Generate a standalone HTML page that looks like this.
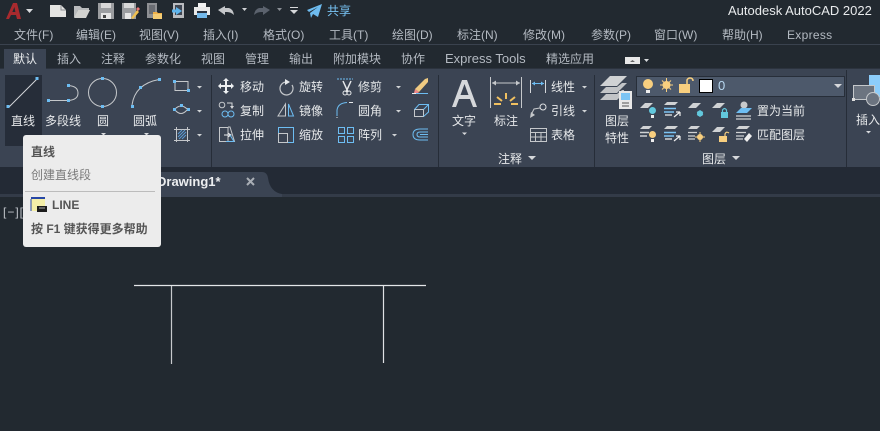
<!DOCTYPE html>
<html><head><meta charset="utf-8">
<style>
html,body{margin:0;padding:0;width:880px;height:431px;overflow:hidden;background:#222930}
body{position:relative;font-family:"Liberation Sans","Noto Sans CJK SC",sans-serif;font-size:12px;color:#e6e8ea}
.t{position:absolute;white-space:nowrap;line-height:16px}
.m{color:#b4bac2;top:27px}
.r{color:#b4bac2;top:51px}
.c{transform:translateX(-50%)}
.b{position:absolute}
svg{position:absolute;left:0;top:0}
</style></head><body>
<!-- bars -->
<div class="b" style="left:0;top:44px;width:880px;height:1px;background:#3a424e"></div>
<div class="b" style="left:0;top:69px;width:880px;height:98px;background:#3b4453"></div>
<div class="b" style="left:0;top:68px;width:880px;height:1px;background:#2c333e"></div>
<div class="b" style="left:0;top:167px;width:880px;height:27px;background:#232a35"></div>
<div class="b" style="left:0;top:194px;width:880px;height:3px;background:#333b48"></div>
<div class="b" style="left:4px;top:49px;width:42px;height:20px;background:#3b4453"></div>
<div class="b" style="left:5px;top:75px;width:37px;height:71px;background:#262d39"></div>

<svg width="880" height="431" viewBox="0 0 880 431" fill="none">
<!-- file tab -->
<path d="M150 194V172H262Q267 172 268 178Q270 192 282 194V197H150Z" fill="#3b4453"/>
<!-- panel separators -->
<g stroke="#262d38" stroke-width="1">
<path d="M211.500 75V167M438.500 75V167M594.500 75V167M846.500 70V167"/>
</g>
<!-- QAT: A logo -->
<path fill-rule="evenodd" d="M6 19L13 3H17L21 19H17L16 15H11L9 19ZM12.300 12H15.400L14.400 7Z" fill="#a82a2e"/>
<path d="M26 9H33L29.500 13Z" fill="#d8dadd"/>
<!-- new -->
<path d="M50 5H61L66 10V17H50Z" fill="#e4e4e2"/><path d="M61 5V10H66" stroke="#8b8e92"/>
<!-- open -->
<path d="M74 8V6H80L82 8H89V10H78L75 17H74Z" fill="#b9bbbd"/><path d="M78 10H90L86 18H74Z" fill="#d2d2d0"/>
<!-- save -->
<path d="M98 3H114V19H98Z" fill="#9b9da0"/><path d="M101 3H111V8H101Z" fill="#d8d8d8"/><path d="M101 13H111V19H101Z" fill="#e6e6e6"/><path d="M103 15H106V18H103Z" fill="#444"/>
<!-- saveas -->
<path d="M122 3H136V19H122Z" fill="#9b9da0"/><path d="M124 3H134V8H124Z" fill="#d8d8d8"/><path d="M125 13H131V19H125Z" fill="#e6e6e6"/>
<path d="M131 18L137 10L139 12L133 19Z" fill="#f0c050"/><path d="M136 9L138 7L140 9L138 11Z" fill="#e77"/>
<!-- phone open -->
<path d="M147 3H157V18H147Z" fill="#8e9094"/><path d="M149 5H155V14H149Z" fill="#6a6d73"/>
<path d="M153 12H157L158 13H162V19H153Z" fill="#eeb04a"/><path d="M153 14H162V19H153Z" fill="#f5cc74"/>
<!-- phone share -->
<path d="M173 3H184V18H173Z" fill="#b9bbbf"/><path d="M175 5H182V15H175Z" fill="#3f4652"/>
<path d="M172 9.500H176V7L182 11L176 15V12.500H172Z" fill="#5eb4ec"/>
<!-- print -->
<path d="M198 3H206V7H198Z" fill="#f2f2f2"/><path d="M194 7H210V15H194Z" fill="#e9e9e9"/><path d="M197 11H207V18H197Z" fill="#74b9ea"/><path d="M197 11H207V13H197Z" fill="#2a3240"/>
<!-- undo redo -->
<path d="M218 10L225 6V8H229Q233 9 234 15Q231 12 227 12H225V15Z" fill="#c5c7ca"/>
<path d="M242 8H247L244.500 11Z" fill="#d0d2d5"/>
<path d="M270 10L263 6V8H259Q255 9 254 15Q257 12 261 12H263V15Z" fill="#5b626d"/>
<path d="M277 8H282L279.500 11Z" fill="#8a8f96"/>
<path d="M290 7H298V8H290Z" fill="#d6d8da"/><path d="M290 10H298L294 14Z" fill="#d6d8da"/>
<!-- share plane -->
<path d="M307 10L322 4L318 17L313 14L311 18L310 13L318 7L309 12Z" fill="#6ebcf0"/>
<!-- minimized panel btn -->
<path d="M625 57H640V64H625Z" fill="#e8e8e8"/><path d="M630 62H635L632.500 60Z" fill="#666"/>
<path d="M644 59H649L646.500 62Z" fill="#d8dadd"/>

<!-- line -->
<path d="M9 107L37 79" stroke="#d4d6d8" stroke-width="1"/>
<rect x="6.500" y="105" width="3" height="3" fill="#6dbdf2"/><rect x="35.500" y="77" width="3" height="3" fill="#6dbdf2"/>
<!-- polyline -->
<path d="M50 100.500H68M68 85.500Q78 86 78 93Q78 100 68 100.500" stroke="#c5c8cb"/>
<rect x="47" y="99" width="3" height="3" fill="#6dbdf2"/><rect x="67" y="99" width="3" height="3" fill="#6dbdf2"/><rect x="67" y="84" width="3" height="3" fill="#6dbdf2"/>
<!-- circle -->
<circle cx="102.500" cy="92.500" r="14" stroke="#c5c8cb"/>
<rect x="101" y="77" width="3" height="3" fill="#6dbdf2"/><rect x="101" y="105" width="3" height="3" fill="#6dbdf2"/>
<!-- arc -->
<path d="M132 105Q135 84 159 79.500" stroke="#c5c8cb"/>
<rect x="131" y="105" width="3" height="3" fill="#6dbdf2"/><rect x="139" y="86" width="3" height="3" fill="#6dbdf2"/><rect x="158" y="78" width="3" height="3" fill="#6dbdf2"/>
<!-- caret small -->
<path d="M101 133H106L103.500 135.500Z M144 133H149L146.500 135.500Z" fill="#d8dadd"/>
<!-- rect / ellipse / hatch -->
<path d="M175 81.500H188V90.500H175Z" stroke="#c5c8cb"/>
<rect x="173" y="80" width="3" height="3" fill="#6dbdf2"/><rect x="187" y="89" width="3" height="3" fill="#6dbdf2"/>
<path d="M175 109Q181 103 187 109M175 110Q181 117 187 110" stroke="#c5c8cb"/>
<rect x="173" y="108" width="3" height="3" fill="#6dbdf2"/><rect x="180" y="104" width="3" height="3" fill="#6dbdf2"/><rect x="187" y="108" width="3" height="3" fill="#6dbdf2"/>
<path d="M174 129.500H190M174 140.500H190M176.500 127V142M187.500 127V142" stroke="#c5c8cb"/>
<path d="M178 134L182 130M178 137L185 130M179 139L186 132M182 139L186 135" stroke="#5a9bd4"/>
<path d="M197 86H202L199.500 88.500ZM197 110H202L199.500 112.500ZM197 134H202L199.500 136.500Z" fill="#d0d3d6"/>

<!-- modify -->
<path d="M226 79V93M219 86H233" stroke="#eef0f2" stroke-width="2"/>
<path d="M226 78L223 81H229ZM226 94L223 91H229ZM218 86L221 83V89ZM234 86L231 83V89Z" fill="#eef0f2"/>
<circle cx="222" cy="105" r="2.800" stroke="#c5c8cb"/><circle cx="225" cy="114" r="3" stroke="#6dbdf2"/><circle cx="231" cy="114" r="3" stroke="#6dbdf2"/>
<path d="M227 103H232V107" stroke="#d5d7da"/><path d="M230 106H234L232 109Z" fill="#d5d7da"/>
<path d="M219.500 127.500H228V141.500H219.500ZM228 127H230L234.500 141.500H228" stroke="#c5c8cb"/>
<path d="M224 135H231M228 133L231 135L228 137" stroke="#eef0f2"/>
<path d="M230 135L234 141.500H226" stroke="#6dbdf2"/>
<path d="M287 82A6.500 6.500 0 1 0 292 85" stroke="#c5c8cb" stroke-width="1.200"/>
<path d="M285 79L290 82L285 85Z" fill="#e6e8ea"/>
<path d="M285.500 116H278L285.500 104Z" stroke="#c5c8cb" fill="none"/>
<path d="M288.500 104L293.500 116H288.500Z" stroke="#6dbdf2"/>
<path d="M278.500 127.500H293.500V142.500H278.500Z" stroke="#6dbdf2"/>
<path d="M278.500 133.500H287.500V142.500H278.500Z" stroke="#c5c8cb" fill="#3b4453"/>
<path d="M337 79H353" stroke="#6dbdf2" stroke-dasharray="2 1"/>
<path d="M343 81L348 92M351 81L346 92" stroke="#e6e8ea" stroke-width="1.500"/>
<circle cx="345" cy="93" r="2" stroke="#e6e8ea"/><circle cx="349" cy="93" r="2" stroke="#e6e8ea"/>
<path d="M337 116V110Q338 103 347 102.500" stroke="#6dbdf2"/><path d="M337 118V117M349 102.500H353" stroke="#e6e8ea"/>
<path d="M338.500 127.500H344.500V133.500H338.500ZM347.500 127.500H353.500V133.500H347.500ZM338.500 136.500H344.500V142.500H338.500ZM347.500 136.500H353.500V142.500H347.500Z" stroke="#6dbdf2"/>
<path d="M396 86H401L398.500 88.500ZM396 110H401L398.500 112.500ZM392 134H397L394.500 136.500Z" fill="#d0d3d6"/>
<!-- eraser etc -->
<path d="M415 89L425 79L428 78V82L419 92Z" fill="#f0cb82"/><path d="M415 89L419 92L417 94L414 93Z" fill="#e88"/>
<path d="M412 93.500H428" stroke="#6dbdf2"/><path d="M412 93.500H416" stroke="#eee"/>
<path d="M414.500 109.500H423.500V116.500H414.500Z" stroke="#c5c8cb"/>
<path d="M414.500 109.500L419 104.500H428.500V112L423.500 116.500M423.500 109.500L428.500 104.500" stroke="#6dbdf2"/>
<path d="M428 129H420Q413 129 413 134.500Q413 140 420 140H428M428 132H420Q417 132 417 134.500Q417 137 420 137H428M420 134.500H428" stroke="#6dbdf2"/>

<!-- annotation -->
<path fill-rule="evenodd" d="M452 107L462 80H467L477 107H473L470 99H459L456 107ZM460.500 95H468.500L464.500 84Z" fill="#d6d8db"/>
<path d="M462 132.500H467L464.500 135Z" fill="#d8dadd"/>
<path d="M490.500 77V108M521.500 77V108" stroke="#c5c8cb"/>
<path d="M492 83H520" stroke="#c5c8cb"/>
<path d="M492 83L496 80.500V85.500ZM520 83L516 80.500V85.500Z" fill="#c5c8cb"/>
<path d="M506 93V99M497 97L502 101M515 97L510 101M494 104H501M511 104H518" stroke="#f0c060" stroke-width="2"/>
<path d="M530.500 80V93M545.500 80V93" stroke="#d5d7da"/><path d="M532 83.500H544" stroke="#6dbdf2"/><path d="M532 83.500L535 81.500V85.500ZM544 83.500L541 81.500V85.500Z" fill="#6dbdf2"/>
<circle cx="543" cy="107" r="3" stroke="#e0e2e4"/><path d="M540 108L534 109L531 115" stroke="#c5c8cb"/><path d="M530 118L531 112L535 115Z" fill="#c5c8cb"/>
<path d="M530.500 128.500H546.500V141.500H530.500ZM530.500 132.500H546.500M530.500 137H546.500M535.500 132.500V141.500M541 132.500V141.500" stroke="#c5c8cb"/>
<path d="M582 86H587L584.500 88.500ZM582 110H587L584.500 112.500Z" fill="#d0d3d6"/>
<path d="M528 156H536L532 160Z" fill="#d6d8db"/>

<!-- layers big -->
<path d="M600 86L610 76H627L617 86Z" fill="#d0d2d4"/>
<path d="M600 93L606 87H617L622 83H627L617 93Z" fill="#c2c4c7"/>
<path d="M600 100L606 94H617L622 90H624V93L617 100Z" fill="#c2c4c7"/>
<rect x="619" y="91" width="13" height="18" fill="#e8e8e8"/><rect x="621" y="93" width="9" height="7" fill="#7cc4f4"/>
<path d="M622 103H629M622 106H629" stroke="#555"/>
<!-- layer combo -->
<rect x="636.500" y="76.500" width="208" height="20" fill="#4d596b" stroke="#272e39"/>
<circle cx="648" cy="84" r="5" fill="#f8cf7f"/><path d="M646 90H650V93H646Z" fill="#eee"/>
<circle cx="666.500" cy="85" r="4" fill="#f8cf7f"/><path d="M666.500 78V92M660 85H673M662 80.500L671 89.500M671 80.500L662 89.500" stroke="#f8cf7f"/>
<path d="M679 84H690V93H679Z" fill="#f8cf7f"/><path d="M687 84V80Q688 78 690 78Q693 78 693 81" stroke="#f8cf7f" stroke-width="1.500"/>
<rect x="699.500" y="79.500" width="13" height="13" fill="#fff" stroke="#000"/>
<path d="M834 84H842L838 88Z" fill="#d6d8db"/>

<!-- layer tools row 1 -->
<path d="M640 108L645 103H653L648 108Z" fill="#d0d2d4"/>
<circle cx="652.500" cy="110.500" r="3.500" fill="#62c8dd"/><path d="M651 115H654V118H651Z" fill="#eee"/>
<path d="M664 105L667 102H678L675 105Z" fill="#d0d2d4"/><path d="M664 108.500H676M664 112H674" stroke="#7cc4f4" stroke-width="1.500"/><path d="M665 115H672" stroke="#d0d2d4" stroke-width="1.500"/>
<path d="M674 117L680 112M680 112V116M680 112H676" stroke="#eee" stroke-width="1.200"/>
<path d="M688 108L693 103H701L696 108Z" fill="#d0d2d4"/>
<circle cx="700" cy="113.500" r="3" fill="#62c8dd"/><path d="M700 110V117M697 112L703 115M703 112L697 115" stroke="#62c8dd"/>
<path d="M712 108L717 103H725L720 108Z" fill="#d0d2d4"/>
<path d="M721 112H728V118H721Z" fill="#62c8dd"/><path d="M722.500 112V110Q724.500 107 726.500 110V112" stroke="#62c8dd" stroke-width="1.200"/>
<circle cx="744" cy="105" r="3.500" fill="#c8cacc"/><path d="M736 113L741 108H752L747 113Z" fill="#6dbdf2"/><path d="M736 116H751M736 119H751" stroke="#d0d2d4" stroke-width="1.200"/>
<!-- row 2 -->
<path d="M640 129L643 126H652L649 129Z" fill="#d0d2d4"/><path d="M640 132.500H649M640 136H647" stroke="#d0d2d4" stroke-width="1.500"/>
<circle cx="652.500" cy="134.500" r="3.500" fill="#f8cf7f"/><path d="M651 139H654V142H651Z" fill="#eee"/>
<path d="M664 129L667 126H678L675 129Z" fill="#d0d2d4"/><path d="M664 132.500H676M664 136H674" stroke="#7cc4f4" stroke-width="1.500"/><path d="M665 139H672" stroke="#d0d2d4" stroke-width="1.500"/>
<path d="M674 141L680 136M680 136V140M680 136H676" stroke="#eee" stroke-width="1.200"/>
<path d="M688 129L691 126H700L697 129Z" fill="#d0d2d4"/><path d="M688 132.500H697M688 136H695M688 139H695" stroke="#d0d2d4" stroke-width="1.200"/>
<circle cx="700" cy="137" r="3" fill="#f8cf7f"/><path d="M700 132V142M695 137H705" stroke="#f8cf7f"/>
<path d="M712 132L717 127H725L720 132Z" fill="#d0d2d4"/>
<path d="M719 136H727V142H719Z" fill="#f8cf7f"/><path d="M725 136V134Q726 131 729 133" stroke="#f8cf7f" stroke-width="1.200"/>
<path d="M736 129L739 126H750L747 129Z" fill="#d0d2d4"/><path d="M736 132.500H746M736 136H744M736 139H743" stroke="#d0d2d4" stroke-width="1.200"/>
<path d="M744 139L749 133L752 136L747 142Z" fill="#eee"/>
<path d="M732 156H740L736 160Z" fill="#d6d8db"/>
<!-- insert -->
<path d="M869 75H880V97H867V85H869Z" fill="#8ccdfb"/>
<rect x="853.500" y="85.500" width="21" height="14" fill="#6c7480" stroke="#c5c8cb"/>
<circle cx="873" cy="99" r="6.500" fill="#6c7480" stroke="#c5c8cb"/>
<rect x="852" y="98" width="3" height="3" fill="#ddd"/>
<path d="M866 131H871L868.500 133.500Z" fill="#d8dadd"/>
<!-- close x -->
<path d="M247 178L254 185M254 178L247 185" stroke="#a9aeb5" stroke-width="2"/>
<!-- drawing -->
<path d="M134 285.500H426" stroke="#e4e6e8" stroke-width="1.200"/>
<path d="M171.500 286V364" stroke="#c8cacd" stroke-width="1.200"/>
<path d="M383.500 286V363" stroke="#dfe1e4" stroke-width="1.200"/>
</svg>

<span class="t" style="left:3px;top:204px;color:#c0c4ca;font-size:12px;letter-spacing:1px">[−][</span>

<!-- title -->
<span class="t" style="left:327px;top:3px;color:#78c3f4;font-size:12px">共享</span>
<span class="t" style="left:728px;top:3px;color:#e8eaec;font-size:13px">Autodesk AutoCAD 2022</span>
<!-- menu -->
<span class="t m" style="left:14px">文件(F)</span>
<span class="t m" style="left:76px">编辑(E)</span>
<span class="t m" style="left:139px">视图(V)</span>
<span class="t m" style="left:203px">插入(I)</span>
<span class="t m" style="left:263px">格式(O)</span>
<span class="t m" style="left:329px">工具(T)</span>
<span class="t m" style="left:392px">绘图(D)</span>
<span class="t m" style="left:457px">标注(N)</span>
<span class="t m" style="left:523px">修改(M)</span>
<span class="t m" style="left:591px">参数(P)</span>
<span class="t m" style="left:654px">窗口(W)</span>
<span class="t m" style="left:722px">帮助(H)</span>
<span class="t m" style="left:787px;letter-spacing:.3px">Express</span>
<!-- tabs -->
<span class="t r" style="left:13px;color:#eceef0">默认</span>
<span class="t r" style="left:57px">插入</span>
<span class="t r" style="left:101px">注释</span>
<span class="t r" style="left:145px">参数化</span>
<span class="t r" style="left:201px">视图</span>
<span class="t r" style="left:245px">管理</span>
<span class="t r" style="left:289px">输出</span>
<span class="t r" style="left:333px">附加模块</span>
<span class="t r" style="left:401px">协作</span>
<span class="t r" style="left:445px;font-size:13px">Express Tools</span>
<span class="t r" style="left:546px">精选应用</span>
<!-- ribbon labels -->
<span class="t c" style="left:23px;top:113px">直线</span>
<span class="t c" style="left:63px;top:113px">多段线</span>
<span class="t c" style="left:103px;top:113px">圆</span>
<span class="t c" style="left:145px;top:113px">圆弧</span>
<span class="t" style="left:240px;top:79px">移动</span>
<span class="t" style="left:240px;top:103px">复制</span>
<span class="t" style="left:240px;top:127px">拉伸</span>
<span class="t" style="left:299px;top:79px">旋转</span>
<span class="t" style="left:299px;top:103px">镜像</span>
<span class="t" style="left:299px;top:127px">缩放</span>
<span class="t" style="left:358px;top:79px">修剪</span>
<span class="t" style="left:358px;top:103px">圆角</span>
<span class="t" style="left:358px;top:127px">阵列</span>
<span class="t c" style="left:464px;top:113px">文字</span>
<span class="t c" style="left:506px;top:113px">标注</span>
<span class="t" style="left:551px;top:79px">线性</span>
<span class="t" style="left:551px;top:103px">引线</span>
<span class="t" style="left:551px;top:127px">表格</span>
<span class="t" style="left:498px;top:151px">注释</span>
<span class="t c" style="left:617px;top:113px">图层</span>
<span class="t c" style="left:617px;top:130px">特性</span>
<span class="t" style="left:718px;top:78px;color:#b8d8f0;font-size:13px">0</span>
<span class="t" style="left:757px;top:103px">置为当前</span>
<span class="t" style="left:757px;top:127px">匹配图层</span>
<span class="t" style="left:702px;top:151px">图层</span>
<span class="t c" style="left:868px;top:112px">插入</span>
<!-- file tab -->
<span class="t" style="left:157px;top:174px;font-weight:bold;font-size:13px;color:#eceef0">Drawing1*</span>

<!-- tooltip -->
<div class="b" style="left:23px;top:135px;width:138px;height:112px;background:#ececec;border-radius:3px"></div>
<span class="t" style="left:31px;top:144px;color:#555;font-weight:bold;font-size:12px">直线</span>
<span class="t" style="left:31px;top:167px;color:#7a7a7a;font-size:12px">创建直线段</span>
<div class="b" style="left:25px;top:191px;width:130px;height:1px;background:#bcbcbc"></div>
<svg width="880" height="431" viewBox="0 0 880 431" fill="none">
<rect x="31" y="197" width="14" height="14" fill="#f4eea8"/>
<rect x="31" y="197" width="14" height="2" fill="#2747a6"/>
<path d="M31 199V211" stroke="#2747a6"/>
<rect x="37" y="206" width="10" height="6" fill="#1c1c1c"/>
<path d="M39 208H45" stroke="#aaa"/>
</svg>
<span class="t" style="left:52px;top:197px;color:#555;font-weight:bold;font-size:12px">LINE</span>
<span class="t" style="left:31px;top:221px;color:#555;font-weight:bold;font-size:12px">按 F1 键获得更多帮助</span>
</body></html>
